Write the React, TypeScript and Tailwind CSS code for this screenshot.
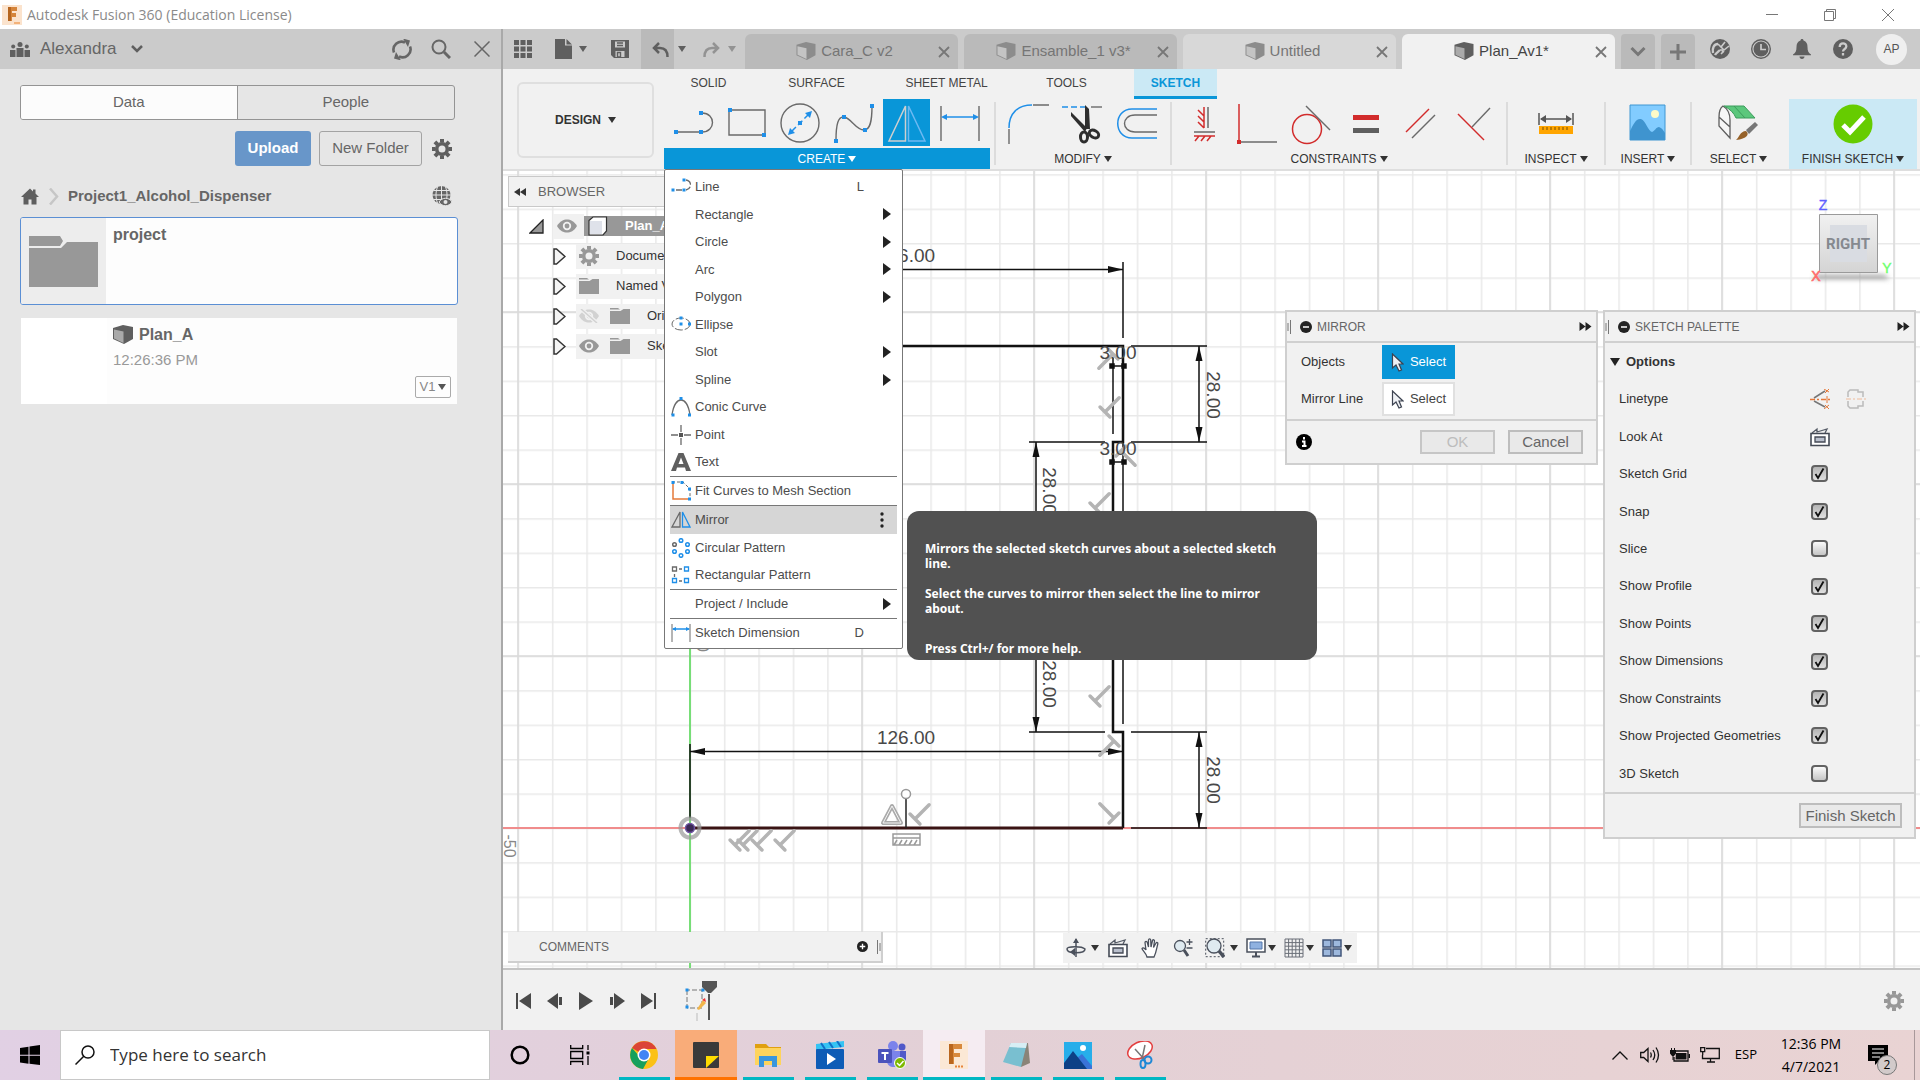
import React, { useState } from "react";

/* ---------- small shared glyphs ---------- */

function Caret({ className = "fill-[#333]" }: { className?: string }) {
  return (
    <svg viewBox="0 0 8 6" className={`h-[6px] w-[8px] shrink-0 ${className}`} aria-hidden="true">
      <path d="M0 0h8L4 6z" />
    </svg>
  );
}

function Icon({ box, className, children }: { box: string; className: string; children: React.ReactNode }) {
  return (
    <svg viewBox={box} className={`shrink-0 ${className}`} fill="none" aria-hidden="true">
      {children}
    </svg>
  );
}

function Cube({ light, dark, className = "h-[20px] w-[20px]" }: { light: string; dark: string; className?: string }) {
  return (
    <Icon box="0 0 20 20" className={className}>
      <path d="M0 3 10 0l10 2v12l-9 5L0 14z" fill={dark} />
      <path d="M1 4.500l9.500 2V18L1 13.500z" fill={light} />
    </Icon>
  );
}

function Gear({ className }: { className: string }) {
  return (
    <Icon box="-10 -10 20 20" className={className}>
      <circle r="5.300" stroke="currentColor" strokeWidth="3.600" />
      <path
        d="M0-6.500V-10M0 6.500V10M-6.500 0H-10M6.500 0H10M4.600-4.600l2.500-2.500M-4.600 4.600l-2.500 2.500M4.600 4.600l2.500 2.500M-4.600-4.600l-2.500-2.500"
        stroke="currentColor"
        strokeWidth="4"
      />
    </Icon>
  );
}

function Eye({ className, off = false }: { className: string; off?: boolean }) {
  return (
    <Icon box="0 0 20 14" className={className}>
      <path d="M0 7C3 2 6.500.500 10 .500S17 2 20 7c-3 5-6.500 6.500-10 6.500S3 12 0 7z" fill="currentColor" />
      <circle cx="10" cy="7" r="4.200" fill="#f1f1f1" />
      <circle cx="10" cy="7" r="2.400" fill="currentColor" />
      {off && (
        <>
          <path d="M1-1 19 15" stroke="#f1f1f1" strokeWidth="4" />
          <path d="M2 0 18 14" stroke="currentColor" strokeWidth="1.500" />
        </>
      )}
    </Icon>
  );
}

function Folder() {
  return (
    <Icon box="0 0 20 16" className="h-[16px] w-[20px]">
      <path d="M0 0h8l2 1.500H0zM0 3h10.500l3-2H20v15H0z" fill="#989898" />
    </Icon>
  );
}

/* ---------- title bar ---------- */

function TitleBar() {
  return (
    <header className="flex h-[29px] shrink-0 items-center bg-white pl-[2px]">
      <Icon box="0 0 20 20" className="h-[20px] w-[20px]">
        <rect width="20" height="20" fill="#fbe3cd" />
        <path d="M6 2h9v4h-5v2h4v4h-4v4H6z" fill="#d5843a" />
        <path d="M6 2h3v14H6z" fill="#b5651f" />
        <path d="M12 17h6v2h-6z" fill="#f3b27a" />
      </Icon>
      <h1 className="ml-[5px] font-['Open_Sans','Noto_Sans',sans-serif] text-[14px] text-[#8a8a8a]">
        Autodesk Fusion 360 (Education License)
      </h1>
      <div className="ml-auto flex items-center">
        <button aria-label="Minimize" className="flex w-[58px] justify-center">
          <Icon box="0 0 12 12" className="h-[12px] w-[12px]"><path d="M0 5.500h12" stroke="#777" /></Icon>
        </button>
        <button aria-label="Restore" className="flex w-[58px] justify-center">
          <Icon box="0 0 12 12" className="h-[12px] w-[12px]">
            <path d="M.500 2.500h9v9h-9zM2.500 2.500v-2h9v9h-2" stroke="#777" />
          </Icon>
        </button>
        <button aria-label="Close" className="mr-[3px] flex w-[58px] justify-center">
          <Icon box="0 0 12 12" className="h-[12px] w-[12px]"><path d="m0 0 12 12M12 0 0 12" stroke="#777" /></Icon>
        </button>
      </div>
    </header>
  );
}

/* ---------- data panel ---------- */

function DataPanel() {
  return (
    <aside className="flex w-[503px] shrink-0 flex-col border-r-2 border-[#a9a9a9] bg-[#e6e6e6] text-[15px] text-[#666]">
      <div className="flex h-[40px] items-center bg-[#cbcbcb] pl-[10px] text-[#666]">
        <Icon box="0 0 20 15" className="h-[15px] w-[20px]">
          <g fill="#5f5f5f">
            <circle cx="10" cy="2.500" r="2.500" /><circle cx="3.200" cy="4.500" r="2" /><circle cx="16.800" cy="4.500" r="2" />
            <path d="M6.500 6h7v9h-7zM0 8h5.500v7H0zM14.500 8H20v7h-5.500z" />
          </g>
        </Icon>
        <button className="ml-[10px] flex items-center text-[17px]">
          Alexandra
          <Icon box="0 0 12 8" className="ml-[14px] h-[8px] w-[12px]"><path d="m1 1 5 5 5-5" stroke="#5f5f5f" strokeWidth="2.500" /></Icon>
        </button>
        <button aria-label="Refresh" className="ml-auto">
          <Icon box="0 0 20 20" className="h-[21px] w-[20px]">
            <path d="M2 13A8 8 0 0 1 13 3M18 7A8 8 0 0 1 7 17" stroke="#666" strokeWidth="2.600" />
            <path d="m11-1 7 2-2 6.500zM9 21l-7-2 2-6.500z" fill="#666" />
          </Icon>
        </button>
        <button aria-label="Search files" className="ml-[19px]">
          <Icon box="0 0 20 20" className="h-[20px] w-[20px]">
            <circle cx="8" cy="8" r="6.500" stroke="#666" strokeWidth="2" /><path d="m13 13 6 6" stroke="#666" strokeWidth="3" />
          </Icon>
        </button>
        <button aria-label="Close panel" className="mr-[11px] ml-[23px]">
          <Icon box="0 0 16 16" className="h-[16px] w-[16px]"><path d="m.500.500 15 15M15.500.500l-15 15" stroke="#666" strokeWidth="1.500" /></Icon>
        </button>
      </div>

      <div className="mt-[16px] mr-[46px] ml-[20px] grid h-[35px] grid-cols-2 overflow-hidden rounded-[3px] border border-[#949494]">
        <button className="border-r border-[#949494] bg-[#fcfcfc]">Data</button>
        <button>People</button>
      </div>

      <div className="mt-[11px] mr-[49px] flex items-center justify-end">
        <button className="h-[35px] w-[76px] rounded-[3px] bg-[#6896c9] font-bold text-white">Upload</button>
        <button className="ml-[8px] h-[35px] w-[103px] rounded-[3px] border border-[#a3a3a3]">New Folder</button>
        <button aria-label="Settings" className="ml-[10px] text-[#5f5f5f]"><Gear className="h-[20px] w-[20px]" /></button>
      </div>

      <nav className="mt-[18px] mr-[49px] ml-[21px] flex h-[24px] items-center">
        <a href="#home" aria-label="Home">
          <Icon box="0 0 18 16" className="h-[17px] w-[18px]">
            <path d="M9 0 0 8.500h2.500V16h5v-5h3v5h5V8.500H18L14.500 5V1h-2.500v2z" fill="#5f5f5f" />
          </Icon>
        </a>
        <Icon box="0 0 10 16" className="ml-[10px] h-[17px] w-[10px]"><path d="m1 0 7 8-7 8" stroke="#c6c6c6" strokeWidth="2.500" /></Icon>
        <a href="#project" className="ml-[9px] font-bold">Project1_Alcohol_Dispenser</a>
        <button aria-label="Open on the web" className="ml-auto">
          <Icon box="0 0 20 20" className="h-[20px] w-[20px]">
            <circle cx="9.500" cy="9" r="9" fill="#666" />
            <path d="M0 9h19M2 4.500h15M2 13.500h15M9.500 0v18M5.500 1c-2 5-2 11 0 16M13.500 1c2 5 2 11 0 16" stroke="#e6e6e6" />
            <path d="M7 16c3-5 10-5 13 0-3 5-10 5-13 0z" fill="#666" stroke="#e6e6e6" />
            <circle cx="13.500" cy="16" r="2" fill="#e6e6e6" />
          </Icon>
        </button>
      </nav>

      <article className="mt-[9px] mr-[43px] ml-[20px] flex h-[88px] overflow-hidden rounded-[3px] border border-[#5b8fd4] bg-[#fdfdfd]">
        <div className="flex w-[85px] items-center justify-center bg-[#ededed]">
          <Icon box="0 0 69 51" className="h-[51px] w-[69px]">
            <path d="M0 0h31l3 5-3 5H0zM0 12h32l6-6h31v45H0z" fill="#989898" />
          </Icon>
        </div>
        <h2 className="mt-[5px] ml-[7px] text-[16px] font-bold">project</h2>
      </article>

      <article className="mt-[13px] mr-[44px] ml-[21px] flex h-[86px] bg-[#fdfdfd]">
        <div className="w-[86px] bg-white" />
        <div className="flex flex-1 flex-col px-[6px] pt-[5px]">
          <h2 className="flex items-center gap-[6px] text-[16px] font-bold">
            <Cube light="#aaa" dark="#5f5f5f" /> Plan_A
          </h2>
          <p className="mt-[2px] text-[#999]">12:26:36 PM</p>
          <button className="mt-auto mb-[6px] flex h-[22px] w-[36px] items-center justify-center gap-[3px] self-end rounded-[2px] border border-[#aaa] text-[13px] text-[#888]">
            V1 <Caret className="fill-[#555]" />
          </button>
        </div>
      </article>
    </aside>
  );
}

/* ---------- document tabs ---------- */

function DocTab({ name, state }: { name: string; state: "dim" | "idle" | "active" }) {
  const look =
    state === "dim"
      ? "bg-[#bababa] text-[#757575]"
      : state === "idle"
        ? "bg-[#d8d8d8] text-[#757575]"
        : "bg-[#f1f1f1] text-[#444]";
  return (
    <div className={`flex h-[35px] w-[213px] items-center rounded-t-[6px] pr-[8px] ${look}`}>
      <button className="flex flex-1 items-center justify-center gap-[5px] pl-[6px] text-[15px] whitespace-nowrap">
        <Cube light={state === "active" ? "#aaa" : "#c4c4c4"} dark={state === "active" ? "#5f5f5f" : "#8c8c8c"} className="h-[19px] w-[20px]" />
        {name}
      </button>
      <button aria-label={`Close ${name}`}>
        <Icon box="0 0 12 12" className="h-[12px] w-[12px]"><path d="m1 1 10 10M11 1 1 11" stroke="#777" strokeWidth="1.800" /></Icon>
      </button>
    </div>
  );
}

function TabStrip() {
  return (
    <div className="flex h-[40px] shrink-0 items-center bg-[#cbcbcb] pl-[11px]">
      <button aria-label="Show data panel">
        <Icon box="0 0 18 18" className="h-[18px] w-[18px]">
          <path d="M0 0h5v5H0zM6.500 0h5v5h-5zM13 0h5v5h-5zM0 6.500h5v5H0zM6.500 6.500h5v5h-5zM13 6.500h5v5h-5zM0 13h5v5H0zM6.500 13h5v5h-5zM13 13h5v5h-5z" fill="#5f5f5f" />
        </Icon>
      </button>
      <button aria-label="File" className="ml-[23px] flex items-center gap-[7px]">
        <Icon box="0 0 17 20" className="h-[20px] w-[17px]"><path d="M0 0h10v6.500h7V20H0zM11.500 0 17 5.500h-5.500z" fill="#5f5f5f" /></Icon>
        <Caret className="fill-[#5f5f5f]" />
      </button>
      <button aria-label="Save" className="ml-[24px]">
        <Icon box="0 0 18 18" className="h-[18px] w-[18px]">
          <path d="M0 0h18v18H3l-3-3z" fill="#5f5f5f" />
          <path d="M4 1.500h10v6H4zM4.500 11h9v6h-9z" fill="#cbcbcb" />
          <path d="M6 3h6M6 5.500h6M6.500 12.500h3v4.500h-3z" stroke="#5f5f5f" strokeWidth="1.400" />
        </Icon>
      </button>
      <button aria-label="Undo" className="ml-[12px] flex h-[40px] w-[33px] items-center justify-center bg-[#bababa]">
        <Icon box="0 0 17 15" className="ml-[6px] h-[15px] w-[17px]">
          <path d="M7 1 2 6l5 5M2 6h6c5 0 7.500 2.500 7.500 9" stroke="#5f5f5f" strokeWidth="2.500" />
        </Icon>
      </button>
      <button aria-label="Undo history" className="ml-[4px]"><Caret className="fill-[#5f5f5f]" /></button>
      <button aria-label="Redo" className="ml-[17px] flex items-center gap-[8px]">
        <Icon box="0 0 17 15" className="h-[15px] w-[17px]">
          <path d="m10 1 5 5-5 5M15 6H9C4 6 1.500 8.500 1.500 15" stroke="#939393" strokeWidth="2.500" />
        </Icon>
        <Caret className="fill-[#939393]" />
      </button>
      <div className="ml-[9px] flex items-end gap-[6px] self-end">
        <DocTab name="Cara_C v2" state="dim" />
        <DocTab name="Ensamble_1 v3*" state="dim" />
        <DocTab name="Untitled" state="idle" />
        <DocTab name="Plan_Av1*" state="active" />
        <button aria-label="All tabs" className="flex h-[35px] w-[34px] items-center justify-center rounded-t-[4px] bg-[#bababa]">
          <Icon box="0 0 16 10" className="h-[10px] w-[16px]"><path d="m1.500 1 6.500 6.500L14.500 1" stroke="#777" strokeWidth="3" /></Icon>
        </button>
        <button aria-label="New tab" className="flex h-[35px] w-[34px] items-center justify-center rounded-t-[4px] bg-[#bababa]">
          <Icon box="0 0 16 16" className="h-[16px] w-[16px]"><path d="M8 0v16M0 8h16" stroke="#777" strokeWidth="3" /></Icon>
        </button>
      </div>
      <div className="ml-auto flex items-center pr-[13px]">
        <button aria-label="Extensions" className="w-[41px]">
          <Icon box="0 0 20 20" className="mx-auto h-[20px] w-[20px]">
            <circle cx="10" cy="10" r="10" fill="#5f5f5f" />
            <path d="M3 14c-1-5 1-9 5-9M5 16c1-2 3-3 5-5" stroke="#cbcbcb" strokeWidth="2.400" />
            <path d="m8 5 3 3 4-5M11 8l3 3 5-4M14 12l-3 3" stroke="#cbcbcb" strokeWidth="1.600" />
            <path d="M10 11h2.500v2.500" stroke="#cbcbcb" strokeWidth="1.500" />
          </Icon>
        </button>
        <button aria-label="Job status" className="w-[41px]">
          <Icon box="0 0 20 20" className="mx-auto h-[20px] w-[20px]">
            <circle cx="10" cy="10" r="9.300" stroke="#5f5f5f" strokeWidth="1.400" />
            <circle cx="10" cy="10" r="7.500" fill="#5f5f5f" />
            <path d="M10 5v5.500h5" stroke="#cbcbcb" strokeWidth="1.700" />
          </Icon>
        </button>
        <button aria-label="Notifications" className="w-[41px]">
          <Icon box="0 0 18 20" className="mx-auto h-[20px] w-[18px]">
            <path d="M9 0c1 0 1.500.700 1.500 1.600C13.500 2.500 14.500 5 14.500 8c0 4 1 6 3.500 7.500v.800H0v-.800C2.500 14 3.500 12 3.500 8c0-3 1-5.500 4-6.400C7.500.700 8 0 9 0zM6.500 17.500h5C11.500 19 10.500 20 9 20s-2.500-1-2.500-2.500z" fill="#5f5f5f" />
          </Icon>
        </button>
        <button aria-label="Help" className="w-[41px]">
          <Icon box="0 0 20 20" className="mx-auto h-[20px] w-[20px]">
            <circle cx="10" cy="10" r="10" fill="#5f5f5f" />
            <path d="M6.700 8C6.700 3 13.500 3.500 13.300 7.500c0 2.500-3.300 2.500-3.300 5M10 14v2.400" stroke="#cbcbcb" strokeWidth="2.300" />
          </Icon>
        </button>
        <button className="ml-[13px] h-[31px] w-[31px] rounded-full bg-[#efefef] text-[12px] text-[#555]">AP</button>
      </div>
    </div>
  );
}

/* ---------- ribbon ---------- */

const B = "#1f8fe8";
const G = "#6a6a6a";
const R = "#d22c2c";

function Dot({ x, y, c = B, s = 4 }: { x: number; y: number; c?: string; s?: number }) {
  return <rect x={x - s / 2} y={y - s / 2} width={s} height={s} fill={c} />;
}

const createTools: Record<string, React.ReactNode> = {
  Line: (
    <>
      <path d="M2 31h29M30 12c14 0 14 19 0 19" stroke={G} strokeWidth="1.400" />
      <Dot x={4} y={31} /><Dot x={29} y={31} /><Dot x={29} y={12} />
    </>
  ),
  Rectangle: (
    <>
      <path d="M4 9h36v25H4z" stroke={G} strokeWidth="1.400" /><Dot x={5} y={9} /><Dot x={39} y={34} />
    </>
  ),
  Circle: (
    <>
      <circle cx="22" cy="22" r="19" stroke={G} strokeWidth="1.400" />
      <path d="M13 31 31 13" stroke={B} strokeWidth="1.500" strokeDasharray="7 3 6 3 9" />
      <path d="m34 10-2 7-5-5zM10 34l2-7 5 5z" fill={B} /><Dot x={22} y={22} />
    </>
  ),
  Spline: (
    <>
      <path d="M4 39C4 24 6 15 12 16c7 1 12 13 20 13 6 0 8-8 8-24" stroke={G} strokeWidth="1.400" />
      <Dot x={4} y={40} /><Dot x={12} y={16} /><Dot x={33} y={29} /><Dot x={40} y={5} />
    </>
  ),
  Mirror: (
    <>
      <path d="M20.500 5v35H4z" stroke="#cfcfcf" strokeWidth="1.500" /><path d="M23.500 5v35H40z" stroke="#6db9f2" strokeWidth="1.500" />
    </>
  ),
  "Sketch Dimension": (
    <>
      <path d="M3 5v35M41 5v35" stroke={G} strokeWidth="1.400" /><path d="M5 16h34" stroke={B} strokeWidth="1.500" />
      <path d="m3 16 6-3v6zM41 16l-6-3v6z" fill={B} />
    </>
  ),
};

const modifyTools: Record<string, React.ReactNode> = {
  Fillet: (
    <>
      <path d="M2 27C2 12 11 4 25 4" stroke={B} strokeWidth="1.500" /><path d="M26 4h16M2 28v15" stroke={G} strokeWidth="1.400" />
    </>
  ),
  Trim: (
    <>
      <path d="M1 6h23" stroke={B} strokeWidth="1.500" strokeDasharray="6 3" /><path d="M30 6h11" stroke={G} strokeWidth="1.400" />
      <path d="m24 4 4 4 1 20h-5zM10 11l16 16-2 4-14-16z" fill="#2e2e2e" />
      <ellipse cx="23" cy="36" rx="3.500" ry="5" stroke="#2e2e2e" strokeWidth="3" />
      <ellipse cx="33" cy="33" rx="5" ry="3.500" transform="rotate(30 33 33)" stroke="#2e2e2e" strokeWidth="3" />
    </>
  ),
  Offset: (
    <>
      <path d="M42 8H17C-2 8-2 37 17 37h25" stroke={B} strokeWidth="1.500" /><path d="M42 14H20C6 14 6 31 20 31h22" stroke={G} strokeWidth="1.400" />
    </>
  ),
};

const constraintTools: Record<string, React.ReactNode> = {
  "Horizontal/Vertical": (
    <>
      <path d="M26 6v21M12 31h21" stroke={G} strokeWidth="1.500" />
      <path d="M22 6v21M12 35h21M16 9l6 6M16 15l6 6M16 21l6 6M17 35l-4 5M23 35l-4 5M29 35l-4 5" stroke={R} strokeWidth="1.500" />
    </>
  ),
  Coincident: (
    <>
      <path d="M3 3v36" stroke={R} strokeWidth="1.500" /><path d="M5 41h36" stroke={G} strokeWidth="1.400" /><Dot x={3} y={41} c={R} />
    </>
  ),
  Tangent: (
    <>
      <circle cx="17" cy="28" r="14.500" stroke={R} strokeWidth="1.500" /><path d="m16 5 24 24" stroke={G} strokeWidth="1.400" />
    </>
  ),
  Equal: (
    <>
      <path d="M9 16.500h26" stroke={R} strokeWidth="5" /><path d="M9 29.500h26" stroke="#5f5f5f" strokeWidth="5" />
    </>
  ),
  Parallel: (
    <>
      <path d="M8 31 31 8" stroke={R} strokeWidth="1.500" /><path d="m14 37 23-23" stroke={G} strokeWidth="1.400" />
    </>
  ),
  Perpendicular: (
    <>
      <path d="m6 13 26 26" stroke={R} strokeWidth="1.500" /><path d="M20 26 38 7" stroke={G} strokeWidth="1.400" />
    </>
  ),
};

const inspectTools = {
  Measure: (
    <>
      <path d="M5 12v12M39 12v12M7 18h30" stroke="#555" strokeWidth="1.500" /><path d="m6 18 6-4v8zM38 18l-6-4v8z" fill="#555" />
      <path d="M5 25h34v8H5z" fill="#ffa500" /><path d="M9 26v3M13 26v3M17 26v3M21 26v3M25 26v3M29 26v3M33 26v3" stroke="#7b5000" />
    </>
  ),
};
const insertTools = {
  Canvas: (
    <>
      <path d="M4 4h35v35H4z" fill="#82ccff" stroke="#3f96d2" /><circle cx="29" cy="13" r="4" fill="#fdfbc8" />
      <path d="M4 30c3-6 6-13 11-12 5 2 7 12 11 13 3-1 4-5 7-5 3 1 4 3 6 6v7H4z" fill="#3f94cf" />
    </>
  ),
};
const selectTools = {
  Select: (
    <>
      <path d="M6 5C3 7 2 12 2 16v9l11 12V19C13 13 11 8 6 5zM2 16l11 10" stroke="#5f5f5f" strokeWidth="1.300" fill="#f7f7f7" />
      <path d="M7 5h20l11 12H19c-2-5-6-9-12-12z" fill="#5bc77c" stroke="#3d9c5c" /><path d="m17 5 11 12" stroke="#3d9c5c" />
      <path d="m29 29 9-8 3 3-9 9z" fill="#777" /><path d="M19 39c3-2 4-9 10-9 4 3 1 8-10 9z" fill="#96622a" />
    </>
  ),
};
const finishTools = {
  "Finish Sketch": (
    <>
      <circle cx="22" cy="23" r="19.500" fill="#66cc00" /><path d="m12 24 7 7 14-15" stroke="#fff" strokeWidth="5" />
    </>
  ),
};

function RibbonGroup({
  label,
  tools,
  className,
  on,
  children,
}: {
  label: string;
  tools: Record<string, React.ReactNode>;
  className: string;
  on?: string;
  children?: React.ReactNode;
}) {
  return (
    <section className={`relative flex shrink-0 flex-col ${className}`}>
      <div className={`flex h-[49px] items-start ${on ? "px-[3px]" : ""}`}>
        {Object.entries(tools).map(([name, art]) => (
          <button
            key={name}
            aria-label={name}
            className={`mx-auto flex h-[47px] w-[47px] items-center justify-center ${on === name ? "bg-[#0996d8]" : ""}`}
          >
            <Icon box="0 0 44 44" className="h-[44px] w-[44px]">{art}</Icon>
          </button>
        ))}
      </div>
      <button
        className={`flex h-[21px] items-center justify-center gap-[3px] text-[12px] whitespace-nowrap ${on ? "bg-[#0996d8] text-white" : "text-[#333]"}`}
      >
        {label} <Caret className={on ? "fill-white" : "fill-[#333]"} />
      </button>
      {children}
    </section>
  );
}

function Rule() {
  return <div className="mt-[3px] h-[63px] w-[2px] shrink-0 bg-[#dcdcdc]" />;
}

/* Menu glyphs, drawn on a 20 x 20 board */
const menuArt: Record<string, React.ReactNode> = {
  Line: (<><path d="M5 13h6M15 3c6 1 6 9 0 10" stroke={G} strokeWidth="1.300" strokeDasharray="7 2" /><Dot x={2} y={13} s={3} /><Dot x={13} y={13} s={3} /><Dot x={13} y={3} s={3} /></>),
  Ellipse: (<><ellipse cx="10" cy="9" rx="9" ry="6" stroke={G} strokeDasharray="8 2" /><Dot x={10} y={3} s={3} /><Dot x={10} y={9} s={3} /><Dot x={18.5} y={9} s={3} /></>),
  "Conic Curve": (<><path d="M1 18C4-2 16-2 19 18" stroke={G} strokeWidth="1.300" /><Dot x={2} y={18} s={3} /><Dot x={10} y={1.500} s={3} /><Dot x={18.5} y={18} s={3} /></>),
  Point: (<><path d="M10 0v7M10 13v7M0 10h7M13 10h7" stroke={G} strokeWidth="1.300" /><Dot x={10} y={10} c="#555" /></>),
  Text: (<path fillRule="evenodd" d="M7.500 1h5L20 19h-5l-1-3.500H6L5 19H0zM10 5.500 7.500 12h5z" fill="#5f5f5f" />),
  "Fit Curves to Mesh Section": (<><path d="M2 1v17h16" stroke="#e5793a" strokeWidth="1.500" /><path d="M1 1h11l7 7v11" stroke={G} strokeDasharray="3 2" /><Dot x={2} y={1.500} s={3} /><Dot x={11} y={1.500} s={3} /><Dot x={18.5} y={8} s={3} /><Dot x={18.5} y={18} s={3} /></>),
  Mirror: (<><path d="M9 2v15H1z" stroke={G} strokeWidth="1.300" /><path d="M11.500 2v15H19z" stroke={B} strokeWidth="1.300" /></>),
  "Circular Pattern": (<><g stroke={B} strokeWidth="1.500"><circle cx="10" cy="2.500" r="1.800" /><circle cx="16.500" cy="6.500" r="1.800" /><circle cx="16.500" cy="13.500" r="1.800" /><circle cx="10" cy="17.500" r="1.800" /><circle cx="3.500" cy="13.500" r="1.800" /></g><circle cx="3.500" cy="6.500" r="1.800" stroke={G} strokeWidth="1.500" /></>),
  "Rectangular Pattern": (<><g stroke={B} strokeWidth="1.300"><path d="M13.500 2h4v4h-4zM13.500 13.500h4v4h-4zM1.500 13.500h4v4h-4z" /></g><path d="M1.500 2h4v4h-4zM8 4h3M8 16h3M3.500 9v3" stroke={G} strokeWidth="1.300" /></>),
  "Sketch Dimension": (<><path d="M1 1v18M19 1v18" stroke={G} /><path d="M2 6h16" stroke={B} strokeWidth="1.500" /><path d="m1 6 4-2v4zM19 6l-4-2v4z" fill={B} /></>),
};

type Entry = { name: string; key?: string; sub?: boolean; on?: boolean };
const menuHead: Entry[] = [
  { name: "Line", key: "L" },
  { name: "Rectangle", sub: true },
  { name: "Circle", sub: true },
  { name: "Arc", sub: true },
  { name: "Polygon", sub: true },
  { name: "Ellipse" },
  { name: "Slot", sub: true },
  { name: "Spline", sub: true },
  { name: "Conic Curve" },
  { name: "Point" },
  { name: "Text" },
];

function MenuRow({ name, key2, sub, on, className = "h-[28px]" }: { name: string; key2?: string; sub?: boolean; on?: boolean; className?: string }) {
  return (
    <button role="menuitem" className={`flex w-full items-center pr-[6px] pl-[1px] text-left text-[13px] text-[#4c4c4c] ${on ? "bg-[#d6d6d6]" : ""} ${className}`}>
      <Icon box="0 0 20 20" className="mr-[4px] h-[20px] w-[20px]">{menuArt[name]}</Icon>
      <span className="flex-1 whitespace-nowrap">{name}</span>
      {key2 && <span className="mr-[27px]">{key2}</span>}
      {sub && <Icon box="0 0 8 12" className="h-[12px] w-[8px]"><path d="m0 0 8 6-8 6z" fill="#222" /></Icon>}
      {on && <Icon box="0 0 4 16" className="mr-[7px] h-[16px] w-[4px]"><path d="M2 2h.010M2 8h.010M2 14h.010" stroke="#222" strokeWidth="3.400" strokeLinecap="round" /></Icon>}
    </button>
  );
}

function CreateMenu() {
  return (
    <div role="menu" className="absolute top-full left-0 z-30 w-[239px] rounded-[2px] border border-[#777] bg-white px-[5px] pt-[3px] pb-[1px]">
      <div className="flex h-[303px] flex-col">
        {menuHead.map((m) => (
          <MenuRow key={m.name} name={m.name} key2={m.key} sub={m.sub} className="flex-1" />
        ))}
      </div>
      <div className="border-t border-[#777]"><MenuRow name="Fit Curves to Mesh Section" /></div>
      <div className="border-t border-[#777]">
        <MenuRow name="Mirror" on />
        <MenuRow name="Circular Pattern" className="h-[27px]" />
        <MenuRow name="Rectangular Pattern" />
      </div>
      <div className="border-t border-[#777]"><MenuRow name="Project / Include" sub /></div>
      <div className="border-t border-[#777]"><MenuRow name="Sketch Dimension" key2="D" /></div>
    </div>
  );
}

function Ribbon() {
  return (
    <div className="relative z-20 flex h-[102px] shrink-0 border-b-2 border-[#dedede] bg-[#f1f1f1]">
      <button className="mt-[13px] ml-[14px] flex h-[76px] w-[137px] shrink-0 items-center justify-center gap-[7px] rounded-[6px] border-2 border-[#dfdfdf] text-[12px] font-bold text-[#333]">
        DESIGN <Caret />
      </button>
      <div className="ml-[10px] flex-1">
        <div className="flex h-[30px] text-[12px] text-[#444]">
          <button className="w-[89px] pb-[2px]">SOLID</button>
          <button className="w-[127px] pb-[2px]">SURFACE</button>
          <button className="w-[133px] pb-[2px]">SHEET METAL</button>
          <button className="w-[107px] pb-[2px]">TOOLS</button>
          <button className="ml-[14px] w-[83px] border-b-3 border-[#0996d8] bg-[#cbe9f5] font-bold text-[#0996d8]">SKETCH</button>
        </div>
        <div className="flex">
          <RibbonGroup label="CREATE" tools={createTools} className="w-[326px]" on="Mirror">
            <CreateMenu />
          </RibbonGroup>
          <div className="ml-[4px]"><Rule /></div>
          <RibbonGroup label="MODIFY" tools={modifyTools} className="mx-[6px] w-[162px]" />
          <Rule />
          <RibbonGroup label="CONSTRAINTS" tools={constraintTools} className="mx-[5px] w-[324px]" />
          <Rule />
          <RibbonGroup label="INSPECT" tools={inspectTools} className="w-[96px]" />
          <Rule />
          <RibbonGroup label="INSERT" tools={insertTools} className="w-[84px]" />
          <Rule />
          <RibbonGroup label="SELECT" tools={selectTools} className="mr-[4px] w-[93px]" />
          <RibbonGroup label="FINISH SKETCH" tools={finishTools} className="w-[128px] bg-[#cbe9f5]" />
        </div>
      </div>
    </div>
  );
}

/* ---------- sketch drawing ---------- */

function Perp({ x, y, a = 45 }: { x: number; y: number; a?: number }) {
  return <path transform={`translate(${x} ${y}) rotate(${a})`} d="M0 0V-20M-7 0H7" stroke="#b4b4b4" strokeWidth="3.500" strokeLinecap="round" />;
}

function Head({ x, y, a }: { x: number; y: number; a: number }) {
  return <path transform={`translate(${x} ${y}) rotate(${a})`} d="M0 0-3.500 15h7z" fill="#111" />;
}

function Tight({ y }: { y: number }) {
  return <path d={`M1113 ${y}h10M1110 ${y - 2}v4h4v-4zM1122 ${y - 2}v4h4v-4z`} stroke="#111" strokeWidth="1.500" fill="#111" />;
}

function SketchDrawing() {
  return (
    <svg className="absolute inset-0 h-full w-full" fill="none" aria-label="Sketch">
      <defs>
        <pattern id="minor" width="34.400" height="34.400" patternUnits="userSpaceOnUse" x="14.500" y="140.800">
          <path d="M.800 0v34.400M0 .800h34.400" stroke="#e9e9e9" strokeWidth="1.500" />
        </pattern>
        <pattern id="major" width="172" height="172" patternUnits="userSpaceOnUse" x="14" y="140">
          <path d="M1 0v172M0 1h172" stroke="#dadada" strokeWidth="1.500" />
        </pattern>
        <linearGradient id="face" x1="0" y1="0" x2="0" y2="1">
          <stop offset="0" stopColor="#f1f1f1" /><stop offset="1" stopColor="#d4d4d4" />
        </linearGradient>
        <filter id="soft" x="-20%" y="-200%" width="140%" height="500%"><feGaussianBlur stdDeviation="2.500" /></filter>
      </defs>
      <rect width="100%" height="100%" fill="#fff" />
      <rect width="100%" height="100%" fill="url(#minor)" />
      <rect width="100%" height="100%" fill="url(#major)" />
      <g transform="translate(-503 -171)">
        <path d="M503 828h2000" stroke="#f08c8c" strokeWidth="2" />
        <path d="M690 171v2000" stroke="#55dd55" strokeWidth="1.500" />
        <g stroke="#111" strokeWidth="1.500">
          <path d="M690 269.500h433M1123 262v76M1131 346h76M1199 346v96M1131 442h76M1029 442h76M1113 358v76M1123 442v282M1036 442v290M1029 732h76M1131 732h76M1199 732v96M1131 828h76M690 744v74M690 751.500h433" />
        </g>
        <path d="M690 346h433v96h-10v290h10v96" stroke="#111" strokeWidth="2.500" />
        <path d="M691 828h432" stroke="#3a1414" strokeWidth="3" />
        <Head x={1123} y={269.5} a={90} /><Head x={690} y={751.5} a={-90} /><Head x={1123} y={751.5} a={90} />
        <Head x={1199} y={346} a={0} /><Head x={1199} y={442} a={180} /><Head x={1036} y={442} a={0} />
        <Head x={1036} y={732} a={180} /><Head x={1199} y={732} a={0} /><Head x={1199} y={828} a={180} />
        <Perp x={1113} y={354} a={225} /><Perp x={1105} y={412} /><Perp x={1121} y={451} a={135} /><Perp x={1095} y={508} />
        <Perp x={1095} y={701} /><Perp x={1114} y={741} a={225} /><Perp x={1114} y={818} a={-45} /><Perp x={915} y={819} />
        <Perp x={735} y={845} /><Perp x={743} y={845} /><Perp x={757} y={845} /><Perp x={780} y={845} />
        <Tight y={366} /><Tight y={462} />
        <path d="M892 806l-9 17h18z" stroke="#aaa" strokeWidth="4" strokeLinejoin="round" />
        <path d="M892 806l-9 17h18z" stroke="#f4f4f4" strokeWidth="1" />
        <path d="M906 799v29" stroke="#222" strokeWidth="1.500" /><circle cx="906" cy="794" r="4.500" stroke="#999" strokeWidth="1.500" fill="#fff" />
        <path d="M893 834h27v4h-27zM894 845l3-5M899 845l3-5M904 845l3-5M909 845l3-5M914 845l3-5M893 838v7h27v-7" stroke="#9a9a9a" strokeWidth="1.500" />
        <circle cx="690" cy="828" r="9.500" stroke="#999" strokeOpacity=".7" strokeWidth="4" />
        <circle cx="690" cy="828" r="4.500" fill="#3b2a55" stroke="#6d55a0" strokeWidth="1.500" />
        <g fill="#484848" fontSize="19" textAnchor="middle">
          <text x="906" y="262">126.00</text><text x="906" y="744">126.00</text>
          <text x="1118" y="359">3.00</text><text x="1118" y="455">3.00</text>
          <text transform="translate(1207 395) rotate(90)">28.00</text>
          <text transform="translate(1043 491) rotate(90)">28.00</text>
          <text transform="translate(1043 684) rotate(90)">28.00</text>
          <text transform="translate(1207 780) rotate(90)">28.00</text>
          <g fill="#888" fontSize="16"><text transform="translate(504 846) rotate(90)">-50</text><text transform="translate(697 643) rotate(90)">50</text></g>
        </g>
        <path d="M1816 275h68l6 4h-76z" fill="#999" filter="url(#soft)" />
        <path d="M1819.500 214.500h58v58h-58z" fill="url(#face)" stroke="#9a9a9a" />
        <path d="M1830 225h37v37h-37z" fill="#d9dce2" />
        <g fontWeight="bold" textAnchor="middle">
          <text x="1848" y="249" fontSize="15" fill="#85898f" fontFamily="'Roboto'">RIGHT</text>
          <g fontSize="14" fontWeight="normal">
            <text x="1823" y="210" fill="#5f5fff" stroke="#5f5fff" strokeWidth=".4">Z</text>
            <text x="1887" y="273" fill="#6dff6d" stroke="#6dff6d" strokeWidth=".4">Y</text>
            <text x="1816" y="281" fill="#ff6d6d" stroke="#ff6d6d" strokeWidth=".6">X</text>
          </g>
        </g>
      </g>
    </svg>
  );
}

/* ---------- browser tree ---------- */

function Expander() {
  return <Icon box="0 0 13 17" className="mr-[10px] h-[17px] w-[13px]"><path d="M1 1h2.500L12 8.500 3.500 16H1z" fill="#f4f4f4" stroke="#333" strokeWidth="1.500" /></Icon>;
}

function TreeRow({ children, label }: { children: React.ReactNode; label: string }) {
  return (
    <li className="flex h-[30px] items-center pl-[45px]">
      <Expander />
      <div className="flex h-[25px] flex-1 items-center gap-[11px] bg-[#f1f1f1] pl-[3px]">
        {children}
        <span className="ml-[6px] whitespace-nowrap">{label}</span>
      </div>
    </li>
  );
}

function Browser() {
  return (
    <div className="absolute top-[5px] left-[5px] w-[330px] text-[13px] text-[#333]">
      <div className="flex h-[31px] items-center border border-[#c9c9c9] bg-[#f1f1f1] pl-[5px] text-[#666]">
        <button aria-label="Collapse browser"><Icon box="0 0 12 8" className="h-[8px] w-[12px]"><path d="M6 0v8L0 4zM12 0v8L6 4z" fill="#333" /></Icon></button>
        <span className="ml-[12px]">BROWSER</span>
      </div>
      <ul className="mt-[4px]">
        <li className="flex h-[30px] items-center pl-[21px]">
          <Icon box="0 0 15 15" className="mr-[9px] h-[15px] w-[15px]"><path d="M14 1v13H1z" fill="#999" stroke="#222" strokeWidth="1.300" /></Icon>
          <div className="flex h-[25px] w-[31px] items-center bg-[#f1f1f1] pl-[4px] text-[#989898]"><Eye className="h-[14px] w-[20px]" /></div>
          <div className="flex h-[20px] flex-1 items-center bg-[#989898] pl-[4px] font-bold text-white">
            <Icon box="0 0 20 20" className="mr-[17px] h-[20px] w-[20px]">
              <path d="M1 4.500 5 1h13.500v14L15 19H1z" fill="#fff" stroke="#333" strokeWidth="1.200" /><path d="M2 5h12v13H2z" fill="#dfe2ea" />
            </Icon>
            Plan_A v1
          </div>
        </li>
        <TreeRow label="Document Settings"><span className="text-[#989898]"><Gear className="h-[20px] w-[20px]" /></span></TreeRow>
        <TreeRow label="Named Views"><Folder /></TreeRow>
        <TreeRow label="Origin"><span className="text-[#d2d2d2]"><Eye off className="h-[14px] w-[20px]" /></span><Folder /></TreeRow>
        <TreeRow label="Sketches"><span className="text-[#989898]"><Eye className="h-[14px] w-[20px]" /></span><Folder /></TreeRow>
      </ul>
    </div>
  );
}

/* ---------- floating panels ---------- */

function PanelHead({ title }: { title: string }) {
  return (
    <div className="flex h-[31px] items-center border-b-2 border-[#d0d0d0] pr-[4px] text-[12px] text-[#666]">
      <Icon box="0 0 4 14" className="h-[14px] w-[4px]"><path d="M1 3v8M3.500 0v14" stroke="#777" /></Icon>
      <button aria-label={`Collapse ${title}`} className="ml-[9px]">
        <Icon box="0 0 12 12" className="h-[12px] w-[12px]"><circle cx="6" cy="6" r="6" fill="#222" /><path d="M3 6h6" stroke="#fff" strokeWidth="1.500" /></Icon>
      </button>
      <h2 className="ml-[5px]">{title}</h2>
      <button aria-label={`Dock ${title}`} className="ml-auto"><Icon box="0 0 12 9" className="h-[9px] w-[13px]"><path d="M0 0v9l6-4.500zM6 0v9l6-4.500z" fill="#222" /></Icon></button>
    </div>
  );
}

function SelectButton({ on, label }: { on?: boolean; label: string }) {
  return (
    <button aria-label={`${label}: Select`} className={`flex h-[34px] w-[73px] items-center justify-center gap-[6px] border-2 text-[13px] ${on ? "border-[#0996d8] bg-[#0996d8] text-white" : "border-[#e0e0e0] bg-white text-[#444]"}`}>
      <Icon box="0 0 13 19" className="h-[19px] w-[13px]"><path d="M1.500 1v14l3.500-3 3 6 2.500-1-2.500-6H12z" fill="#eef0f4" stroke="#3c4250" strokeWidth="1.200" /></Icon>
      Select
    </button>
  );
}

function MirrorPanel() {
  return (
    <section className="absolute top-[139px] right-[322px] w-[313px] border-2 border-[#cfcfcf] bg-[#f1f1f1] text-[13px] text-[#333]">
      <PanelHead title="MIRROR" />
      <div className="grid grid-cols-[81px_1fr] items-center gap-y-[3px] pt-[2px] pb-[3px] pl-[14px]">
        <span>Objects</span><SelectButton on label="Objects" />
        <span>Mirror Line</span><SelectButton label="Mirror Line" />
      </div>
      <div className="flex h-[44px] items-center border-t-2 border-[#d0d0d0] pr-[13px] pl-[9px] text-[15px]">
        <Icon box="0 0 16 16" className="h-[16px] w-[16px]"><circle cx="8" cy="8" r="8" fill="#000" /><path d="M8 3v2.400M6 7.500h2.500V12M6 12h4.500" stroke="#fff" strokeWidth="2" /></Icon>
        <button disabled className="ml-auto h-[24px] w-[75px] border-2 border-[#c6c6c6] bg-[#e9e9e9] leading-[20px] text-[#bdbdbd]">OK</button>
        <button className="ml-[13px] h-[24px] w-[75px] border-2 border-[#bdbdbd] bg-[#e9e9e9] leading-[20px] text-[#666]">Cancel</button>
      </div>
    </section>
  );
}

const toggles: [string, boolean][] = [
  ["Sketch Grid", true],
  ["Snap", true],
  ["Slice", false],
  ["Show Profile", true],
  ["Show Points", true],
  ["Show Dimensions", true],
  ["Show Constraints", true],
  ["Show Projected Geometries", true],
  ["3D Sketch", false],
];

function Toggle({ name, initial }: { name: string; initial: boolean }) {
  const [on, setOn] = useState(initial);
  return (
    <label className="flex flex-1 items-center pl-[14px]">
      <span className="w-[192px]">{name}</span>
      <span className="relative h-[17px] w-[17px]">
        <input
          type="checkbox"
          checked={on}
          onChange={() => setOn(!on)}
          className="block h-[17px] w-[17px] appearance-none rounded-[4px] border-2 border-[#626262] bg-linear-to-b from-[#fafafa] to-[#c6c6c6] checked:from-[#b4b4b4] checked:to-[#e0e0e0]"
        />
        {on && (
          <svg viewBox="0 0 17 17" className="pointer-events-none absolute inset-0" fill="none" aria-hidden="true">
            <path d="m4.500 9 2.500 4 5.500-9.500" stroke="#111" strokeWidth="1.800" />
          </svg>
        )}
      </span>
    </label>
  );
}

function LookAtIcon({ className }: { className: string }) {
  return (
    <Icon box="0 0 20 20" className={className}>
      <path d="m2 6 5-4v3l10-3-2 4" stroke="#555b66" strokeWidth="1.300" />
      <path d="M1 6.500h18v12H1z" fill="#fff" stroke="#444a55" strokeWidth="1.600" /><path d="M5 10h10v5H5z" fill="#b9bfcc" stroke="#444a55" strokeWidth="1.300" />
    </Icon>
  );
}

function SketchPalette() {
  return (
    <section className="absolute top-[139px] right-[4px] w-[313px] border-2 border-[#cfcfcf] bg-[#f1f1f1] text-[13px] text-[#333]">
      <PanelHead title="SKETCH PALETTE" />
      <div className="flex h-[449px] flex-col">
        <button className="flex flex-1 items-center gap-[6px] pl-[5px] font-bold">
          <Icon box="0 0 10 8" className="h-[8px] w-[10px]"><path d="M0 0h10L5 8z" fill="#222" /></Icon> Options
        </button>
        <div className="flex flex-1 items-center pl-[14px]">
          <span className="w-[191px]">Linetype</span>
          <button aria-label="Construction">
            <Icon box="0 0 20 20" className="h-[20px] w-[20px]">
              <path d="M15 2 4 9M4 12l11 6" stroke="#777" strokeWidth="1.500" /><path d="M0 10.500h20" stroke="#e5793a" strokeWidth="1.500" strokeDasharray="5 2 2 2" />
              <path d="m14 0 5 3M19 0l-4 4M14 20l5-4M15 16l4 4M17 7v7" stroke="#e5793a" />
            </Icon>
          </button>
          <button aria-label="Centerline" className="ml-[16px]">
            <Icon box="0 0 20 20" className="h-[20px] w-[20px]">
              <path d="M2 8V3l2-2h8v2h5v5M2 12v5l2 2h8v-2h5v-5" stroke="#bbb" strokeWidth="1.500" /><path d="M0 10h20" stroke="#f0cdb8" strokeWidth="1.300" strokeDasharray="5 2 2 2" />
            </Icon>
          </button>
        </div>
        <div className="flex flex-1 items-center pl-[14px]">
          <span className="w-[191px]">Look At</span>
          <button aria-label="Look at sketch plane"><LookAtIcon className="h-[20px] w-[20px]" /></button>
        </div>
        {toggles.map(([n, v]) => <Toggle key={n} name={n} initial={v} />)}
      </div>
      <div className="flex h-[45px] items-center justify-end border-t-2 border-[#d0d0d0] pr-[12px]">
        <button className="h-[25px] w-[103px] border-2 border-[#bdbdbd] bg-[#e9e9e9] text-[15px] leading-[21px] whitespace-nowrap text-[#666]">Finish Sketch</button>
      </div>
    </section>
  );
}

function Tooltip() {
  return (
    <div role="tooltip" className="absolute top-[340px] left-[404px] z-10 w-[410px] rounded-[12px] bg-[#515151] px-[18px] pt-[30px] pb-[4px] font-['Noto_Sans','Open_Sans',sans-serif] text-[12px] leading-[15px] font-bold text-white">
      <p>Mirrors the selected sketch curves about a selected sketch line.</p>
      <p className="mt-[15px]">Select the curves to mirror then select the line to mirror about.</p>
      <p className="mt-[25px]">Press Ctrl+/ for more help.</p>
    </div>
  );
}

function CommentsBar() {
  return (
    <div className="absolute bottom-[5px] left-[5px] flex h-[31px] w-[375px] items-center border-r-2 border-b-2 border-[#cfcfcf] bg-[#f1f1f1] pl-[31px] text-[12px] text-[#666]">
      <span>COMMENTS</span>
      <button aria-label="Add comment" className="ml-auto">
        <Icon box="0 0 12 12" className="h-[11px] w-[11px]"><circle cx="6" cy="6" r="6" fill="#222" /><path d="M3 6h6M6 3v6" stroke="#fff" strokeWidth="1.500" /></Icon>
      </button>
      <Icon box="0 0 4 14" className="ml-[9px] h-[14px] w-[4px]"><path d="M.500 0v14M3 3v8" stroke="#777" /></Icon>
    </div>
  );
}

const N = "#4a505c";
function NavButton({ label, drop, className, children }: { label: string; drop?: boolean; className: string; children: React.ReactNode }) {
  return (
    <button aria-label={label} className={`flex items-center gap-[2px] ${className}`}>
      {children}
      {drop && <Caret />}
    </button>
  );
}

function NavBar() {
  const c = "h-[20px] w-[20px]";
  return (
    <div className="absolute bottom-[5px] left-[560px] flex h-[30px] items-center bg-[#f1f1f1] px-[3px]">
      <NavButton label="Orbit" drop className="w-[42px] gap-[5px]">
        <Icon box="0 0 20 20" className={c}>
          <path d="M10 1v18M19 11c0 5-18 5-18 0 0-3 15-3 18 0z" stroke={N} strokeWidth="1.500" /><path d="m7 5 3-5 3 5zM9 10l-5 4 5 4z" fill={N} />
        </Icon>
      </NavButton>
      <NavButton label="Look at" className="w-[33px]"><LookAtIcon className={c} /></NavButton>
      <NavButton label="Pan" className="w-[32px]">
        <Icon box="0 0 20 20" className={c}>
          <path d="M6 19C5 15 1 12 1 10.500c1-1.500 3 0 4 1.500L4 4.500c0-1.500 2-1.500 2.300 0L7.500 9V2c.200-1.500 2-1.500 2.200 0L10 9l1.500-6.500c.500-1.200 2.200-.800 2 .500L12.500 9.500 15 5c.700-1 2.200-.200 1.800 1-1 3-1.300 8-3.800 13z" stroke={N} strokeWidth="1.300" fill="#fff" />
        </Icon>
      </NavButton>
      <NavButton label="Zoom" className="w-[32px]">
        <Icon box="0 0 20 20" className={c}>
          <circle cx="7" cy="8" r="5.500" fill="#dfeaf0" stroke={N} strokeWidth="1.300" /><path d="m11 12 4 6" stroke={N} strokeWidth="3" /><path d="M13.500 4h6M16.500 1v6M13.500 10h6" stroke={N} strokeWidth="1.300" />
        </Icon>
      </NavButton>
      <NavButton label="Fit" drop className="w-[41px]">
        <Icon box="0 0 20 20" className={`${c} mr-[3px]`}>
          <path d="M.700.700h18v18H.700z" stroke={N} strokeDasharray="2 2" /><circle cx="9" cy="8" r="7" fill="#dfeaf0" stroke={N} strokeWidth="1.300" /><path d="m14 13 5 6" stroke={N} strokeWidth="3.500" />
        </Icon>
      </NavButton>
      <NavButton label="Display settings" drop className="w-[38px]">
        <Icon box="0 0 20 20" className={c}>
          <path d="M1 1h18v13H1z" fill="#fff" stroke={N} strokeWidth="1.500" /><path d="M4 4h12v7H4z" fill="#8fb1e0" stroke="#5577aa" /><path d="M6 18.500h8M10 14v4" stroke={N} strokeWidth="2" />
        </Icon>
      </NavButton>
      <NavButton label="Grid and snaps" drop className="w-[38px]">
        <Icon box="0 0 20 20" className={c}>
          <path d="M1 1h18v18H1zM4.600 1v18M8.200 1v18M11.800 1v18M15.400 1v18M1 4.600h18M1 8.200h18M1 11.800h18M1 15.400h18" stroke="#6a6f78" />
        </Icon>
      </NavButton>
      <NavButton label="Viewports" drop className="w-[32px]">
        <Icon box="0 0 20 20" className={c}>
          <path d="M1 2h8v7H1zM11 2h8v7h-8zM1 11h8v7H1zM11 11h8v7h-8z" fill="#9db8dd" stroke="#41557a" strokeWidth="1.500" />
        </Icon>
      </NavButton>
    </div>
  );
}

/* ---------- timeline ---------- */

const transport: [string, string][] = [
  ["Go to start", "M1 1h2v16H1zM16 1v16L4 9z"],
  ["Step back", "M12 1v16L1 9zM13 5h3v8h-3z"],
  ["Play", "M2 0v18l14-9z"],
  ["Step forward", "M6 1v16l11-8zM2 5h3v8H2z"],
  ["Go to end", "M2 1v16l12-8zM15 1h2v16h-2z"],
];

function Timeline() {
  return (
    <footer className="flex h-[62px] shrink-0 items-center border-t-2 border-[#c4c4c4] bg-[#f1f1f1] pt-[1px] pl-[12px]">
      {transport.map(([n, d]) => (
        <button key={n} aria-label={n} className="mr-[13px]"><Icon box="0 0 18 18" className="h-[18px] w-[18px]"><path d={d} fill="#4a4a4a" /></Icon></button>
      ))}
      <button aria-label="Sketch1" className="ml-[15px]">
        <Icon box="0 0 34 40" className="h-[40px] w-[34px]">
          <path d="M2 9v18h15V9z" stroke="#777" strokeDasharray="5 2" /><Dot x={2} y={9} s={3} /><Dot x={18} y={9} s={3} /><Dot x={2} y={26} s={3} />
          <path d="M24 13v26" stroke="#555" strokeWidth="2" /><path d="M17 0h15v6l-6 6h-3l-6-6z" fill="#555" />
          <path d="m12 28 6-9 3 3-7 7z" fill="#f2b54a" /><path d="m17 19 3-2 1 4z" fill="#e33" /><path d="M12 32v8" stroke="#bbb" />
        </Icon>
      </button>
      <button aria-label="Timeline settings" className="mr-[16px] ml-auto text-[#989898]"><Gear className="h-[20px] w-[20px]" /></button>
    </footer>
  );
}

/* ---------- task bar ---------- */

const apps: { name: string; art: React.ReactNode; cell?: string; line?: string }[] = [
  {
    name: "Chrome",
    art: (
      <>
        <circle cx="14" cy="14" r="14" fill="#fbc116" /><path d="M14 14 2 7a14 14 0 0 1 24.500 1H14z" fill="#db4437" />
        <path d="M2 7A14 14 0 0 0 13 28l6-11-9-1z" fill="#16a05d" /><circle cx="14" cy="14" r="6.500" fill="#fff" /><circle cx="14" cy="14" r="5" fill="#4285f4" />
      </>
    ),
  },
  {
    name: "Sticky Notes",
    cell: "bg-[#f9ac79]",
    line: "w-full bg-[#ff7200]",
    art: (<><rect x="1" y="1" width="26" height="26" rx="1" fill="#3a3a3a" /><path d="M14 27V15h13z" fill="#ffdc00" /></>),
  },
  {
    name: "File Explorer",
    art: (<><path d="M1 3h11l3 3h12v18H1z" fill="#e0a010" /><path d="M1 7h26v17H1z" fill="#fed45c" /><path d="M5 15h18v11h-5v-6h-8v6H5z" fill="#3a96dd" /></>),
  },
  {
    name: "Movies",
    art: (<><path d="M0 3 29 0v6L0 9z" fill="#35c3f3" /><path d="m5 2 4 6M13 1l4 6M21 0l4 6" stroke="#1170c8" strokeWidth="2" /><rect y="8" width="28" height="20" rx="1" fill="#0d5cb6" /><path d="M11 12v12l9-6z" fill="#fff" /></>),
  },
  {
    name: "Teams",
    art: (
      <>
        <circle cx="15" cy="5" r="5" fill="#7b83eb" /><circle cx="24" cy="6" r="3.500" fill="#5059c9" /><path d="M18 10h10v8c0 4-6 5-8 2z" fill="#5059c9" />
        <path d="M9 10h13v10c0 8-13 8-13 0z" fill="#7b83eb" /><rect y="8" width="14" height="14" rx="1" fill="#4b53bc" />
        <path d="M3.500 12h7M7 12v7" stroke="#fff" strokeWidth="2" /><circle cx="22" cy="22" r="5.500" fill="#7db800" stroke="#fff" /><path d="m19 22 2.500 2.500L25.500 20" stroke="#fff" strokeWidth="1.500" />
      </>
    ),
  },
  {
    name: "Fusion 360",
    cell: "bg-[#f5ecf2]",
    line: "w-full bg-[#00b7c3]",
    art: (<><rect width="28" height="28" fill="#fbe8d5" /><path d="M9 3h13v5h-8v4h6v4h-6v7H9z" fill="#d8893c" /><path d="M9 3h4v20H9z" fill="#b9661d" /><path d="M15 25.500h9" stroke="#e8843a" strokeWidth="2" strokeDasharray="2 1" /></>),
  },
  {
    name: "Notepad",
    art: (<><path d="m14 3 12-1 2 20-9 4z" fill="#8a8478" /><path d="M9 2h16l-6 24L1 21z" fill="#79bfd0" /><path d="M9 2h16l-1 5L7 6z" fill="#d7eef4" /></>),
  },
  {
    name: "Photos",
    line: "w-[51px] bg-[#00b7c3]",
    art: (<><rect y="1" width="28" height="27" fill="#27aeea" /><path d="m13 17 5-4 10 12v3H13z" fill="#3a73d8" /><path d="M0 22 9 10l14 18H0z" fill="#0d4186" /><circle cx="19" cy="7" r="3" fill="#fff" /></>),
  },
  {
    name: "Snip & Sketch",
    art: (
      <>
        <ellipse cx="14" cy="9" rx="13" ry="8" transform="rotate(-25 14 9)" fill="#fff" stroke="#e33f3f" strokeWidth="1.500" />
        <path d="m9 8 9 10M19 4l-3 14" stroke="#777" strokeWidth="1.500" /><circle cx="22" cy="19" r="3.500" stroke="#1e88d6" strokeWidth="2" /><ellipse cx="17" cy="23" rx="2.500" ry="4" stroke="#1e88d6" strokeWidth="2" />
      </>
    ),
  },
];

function TaskBar() {
  return (
    <footer className="flex h-[50px] shrink-0 items-stretch bg-linear-to-r from-[#e1d0e4] via-[#e3d0d6] to-[#e9d3d3] font-['Open_Sans','Noto_Sans',sans-serif] text-black">
      <button aria-label="Start" className="flex w-[60px] items-center justify-center">
        <Icon box="0 0 20 20" className="h-[20px] w-[20px]"><path d="M0 3 8.500 1.700v8H0zM9.500 1.500 20 0v9.700H9.500zM0 10.700h8.500v8L0 17.400zM9.500 10.700H20V20L9.500 18.700z" fill="#000" /></Icon>
      </button>
      <label className="flex w-[430px] items-center border border-[#c8c8c8] bg-white pl-[14px]">
        <Icon box="0 0 20 20" className="h-[20px] w-[20px]"><circle cx="13" cy="7" r="6" stroke="#111" strokeWidth="1.500" /><path d="m9 11-8.500 8.500" stroke="#111" strokeWidth="1.500" /></Icon>
        <input aria-label="Search" placeholder="Type here to search" className="ml-[15px] w-full bg-transparent text-[17px] outline-none placeholder:text-[#333]" />
      </label>
      <button aria-label="Cortana" className="flex w-[60px] items-center justify-center">
        <Icon box="0 0 20 20" className="h-[20px] w-[20px]"><circle cx="10" cy="10" r="8.300" stroke="#000" strokeWidth="2.500" /></Icon>
      </button>
      <button aria-label="Task view" className="mr-[3px] flex w-[60px] items-center justify-center">
        <Icon box="0 0 20 20" className="h-[20px] w-[20px]"><path d="M.700 0v3.500h12V0M.700 6.500h12v7H.700zM.700 20v-3.500h12V20M18 0v5M18 11v9" stroke="#000" strokeWidth="1.300" /><path d="M16.500 6.500h3v3h-3z" fill="#000" /></Icon>
      </button>
      {apps.map((a) => (
        <button key={a.name} aria-label={a.name} className={`flex w-[62px] flex-col items-center ${a.cell ?? ""}`}>
          <Icon box="0 0 28 28" className="mt-[11px] h-[28px] w-[28px]">{a.art}</Icon>
          <span className={`mt-auto h-[3px] ${a.line ?? "w-[51px] bg-[#00b7c3]"}`} />
        </button>
      ))}
      <div className="ml-auto flex items-center">
        <button aria-label="Hidden icons" className="w-[30px]"><Icon box="0 0 16 9" className="mx-auto h-[9px] w-[16px]"><path d="m.500 8.500 7.500-7.500 7.500 7.500" stroke="#111" strokeWidth="1.300" /></Icon></button>
        <button aria-label="Volume" className="w-[30px]"><Icon box="0 0 20 18" className="mx-auto h-[18px] w-[20px]"><path d="M.700 6.500h3L8 2.500v13l-4.300-4h-3zM10.500 6.500q1.500 2.500 0 5M13 4q3.500 5 0 10M16 1.500q5 7.500 0 15" stroke="#111" strokeWidth="1.300" /></Icon></button>
        <button aria-label="Battery" className="w-[30px]"><Icon box="0 0 20 14" className="mx-auto h-[14px] w-[20px]"><path d="M5 3h13v10H4V9" stroke="#111" strokeWidth="1.300" /><path d="M6 5h10.500v6.500H5.500zM18.500 6H20v4h-1.500zM0 2h6v3.500L4 8H2L0 5.500z" fill="#111" /><path d="M1.500 0v3M4.500 0v3M3 7v5" stroke="#111" /></Icon></button>
        <button aria-label="Network" className="w-[30px]"><Icon box="0 0 20 16" className="mx-auto h-[16px] w-[20px]"><path d="M6 1.500h13.300v10H2.500V8M10.500 12v3M7 15h8M.700.700h4v4h-4zM2.700 5v3" stroke="#111" strokeWidth="1.300" /></Icon></button>
        <button className="ml-[10px] text-[13px]">ESP</button>
        <button className="ml-[19px] w-[70px] text-center text-[14px] leading-[23px]">
          <span className="block whitespace-nowrap">12:36 PM</span>
          <span className="block">4/7/2021</span>
        </button>
        <button aria-label="Notifications, 2 new" className="relative ml-[22px] h-[20px] w-[20px]">
          <Icon box="0 0 20 20" className="h-[20px] w-[20px]"><path d="M0 0h20v16h-9l-4 4v-4H0z" fill="#000" /><path d="M4 4h12M4 8h12M4 12h8" stroke="#fff" /></Icon>
          <span className="absolute top-[10px] left-[9px] flex h-[20px] w-[20px] items-center justify-center rounded-full border border-[#777] bg-[#d2caca] text-[12px]">2</span>
        </button>
        <span className="ml-[26px] h-[50px] w-[6px] border-l border-[#a8989a]" />
      </div>
    </footer>
  );
}

export default function App() {
  return (
    <div className="flex h-screen flex-col overflow-hidden bg-[#f1f1f1] font-['Liberation_Sans',Arial,sans-serif]">
      <TitleBar />
      <div className="flex min-h-0 flex-1">
        <DataPanel />
        <main className="flex min-w-0 flex-1 flex-col">
          <TabStrip />
          <Ribbon />
          <div className="relative min-h-0 flex-1 overflow-hidden">
            <SketchDrawing />
            <Browser />
            <MirrorPanel />
            <SketchPalette />
            <CommentsBar />
            <NavBar />
            <Tooltip />
          </div>
          <Timeline />
        </main>
      </div>
      <TaskBar />
    </div>
  );
}
